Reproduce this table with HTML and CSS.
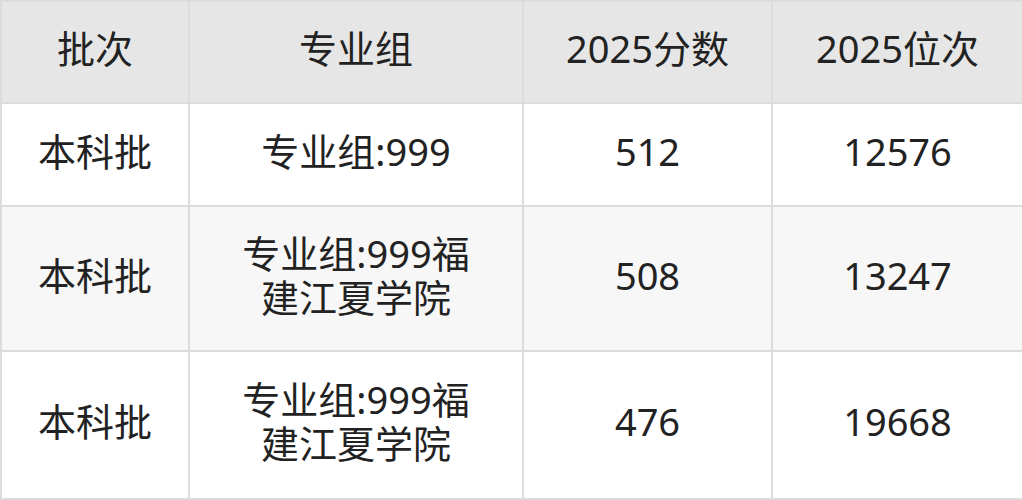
FILE: index.html
```html
<!DOCTYPE html>
<html lang="zh">
<head>
<meta charset="utf-8">
<link rel="stylesheet" href="styles.css">
</head>
<body>
<table class="score-table">
  <colgroup>
    <col class="c1"><col class="c2"><col class="c3"><col class="c4">
  </colgroup>
  <thead>
    <tr class="head-row">
      <th>批次</th><th>专业组</th><th>2025分数</th><th>2025位次</th>
    </tr>
  </thead>
  <tbody>
    <tr class="row-a">
      <td>本科批</td><td class="group">专业组:999</td><td>512</td><td>12576</td>
    </tr>
    <tr class="row-b">
      <td>本科批</td><td class="group">专业组:999福建江夏学院</td><td>508</td><td>13247</td>
    </tr>
    <tr class="row-c">
      <td>本科批</td><td class="group">专业组:999福建江夏学院</td><td>476</td><td>19668</td>
    </tr>
  </tbody>
</table>
</body>
</html>
```
FILE: styles.css
```css
html, body {
  margin: 0;
  padding: 0;
  background: #ffffff;
}
.score-table {
  width: 1022px;
  table-layout: fixed;
  border-collapse: collapse;
  font-family: "Noto Sans", "Noto Sans CJK SC", sans-serif;
  font-size: 38px;
  color: #222222;
}
.c1 { width: 188px; }
.c2 { width: 334px; }
.c3 { width: 249px; }
.c4 { width: 251px; }
.score-table th,
.score-table td {
  border: 2px solid #dcdcdc;
  text-align: center;
  vertical-align: middle;
  font-weight: normal;
  line-height: 44px;
  padding: 0 6px 8px;
}
.head-row th {
  background: #e6e6e6;
  height: 92px;
}
.row-a td { height: 93px; background: #ffffff; }
.row-b td { height: 135px; background: #f7f7f7; }
.row-c td { height: 138px; background: #ffffff; }
.score-table td.group { padding: 0 46px 8px; }
```
